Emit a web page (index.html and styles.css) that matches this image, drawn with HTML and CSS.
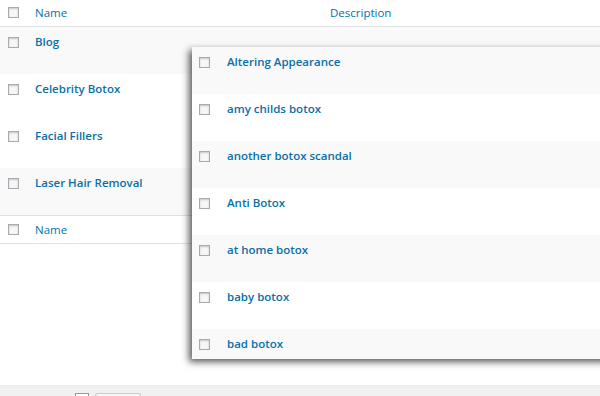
FILE: index.html
```html
<!DOCTYPE html>
<html lang="en">
<head>
  <meta charset="UTF-8">
  <meta name="viewport" content="width=device-width, initial-scale=1.0">
  <title>Tags</title>
  <link rel="stylesheet" href="styles.css">
</head>
<body>
  <div class="screen">
    <!-- tabel kategori di belakang -->
    <div class="list">
      <div class="row head">
        <span class="check"></span>
        <span class="col-name">Name</span>
        <span class="col-desc">Description</span>
      </div>
      <div class="row item alt"><span class="check"></span><a class="title">Blog</a></div>
      <div class="row item"><span class="check"></span><a class="title">Celebrity Botox</a></div>
      <div class="row item"><span class="check"></span><a class="title">Facial Fillers</a></div>
      <div class="row item alt"><span class="check"></span><a class="title">Laser Hair Removal</a></div>
      <div class="row head foot">
        <span class="check"></span>
        <span class="col-name">Name</span>
      </div>
    </div>

    <div class="spacer"></div>

    <div class="bottom-bar">
      <span class="mini-select"></span>
      <span class="mini-button"></span>
    </div>

    <!-- panel tag yang menimpa tabel -->
    <div class="popup">
      <div class="row item alt"><span class="check"></span><a class="title">Altering Appearance</a></div>
      <div class="row item"><span class="check"></span><a class="title">amy childs botox</a></div>
      <div class="row item alt"><span class="check"></span><a class="title">another botox scandal</a></div>
      <div class="row item"><span class="check"></span><a class="title">Anti Botox</a></div>
      <div class="row item alt"><span class="check"></span><a class="title">at home botox</a></div>
      <div class="row item"><span class="check"></span><a class="title">baby botox</a></div>
      <div class="row item alt"><span class="check"></span><a class="title">bad botox</a></div>
    </div>
  </div>
</body>
</html>
```

FILE: styles.css
```css
body { margin: 0; background: #fff; font-family: "Open Sans", Arial, sans-serif; font-size: 11.5px; color: #0073aa; }
.screen { position: relative; width: 600px; height: 396px; overflow: hidden; }

.row { display: flex; align-items: flex-start; box-sizing: border-box; }
.check {
  flex: none;
  width: 9px;
  height: 9px;
  margin: 0 16px 0 8px;
  border: 1px solid #a7abb0;
  background: #f7f7f7;
  box-shadow: inset 0 1px 2px rgba(0,0,0,.2);
}

.head { height: 27px; padding-top: 7px; border-bottom: 1px solid #e1e1e1; }
.head .col-name { line-height: 12px; width: 295px; }
.head .col-desc { line-height: 12px; }
.foot { border-top: 1px solid #e1e1e1; height: 29px; padding-top: 8px; }

.item { height: 47px; padding-top: 10px; }
.alt { background: #f9f9f9; }
.title { font-weight: 600; line-height: 12px; margin-top: -1px; color: #0a6fa6; }

.spacer { height: 141px; }

.bottom-bar {
  height: 11px;
  background: #f1f1f1;
  border-top: 1px solid #ececec;
  display: flex;
  align-items: flex-start;
  padding-top: 7px;
}
.mini-select {
  width: 12px;
  height: 10px;
  margin-left: 75px;
  border: 1px solid #999;
  border-bottom: none;
  background: #fff;
}
.mini-button {
  width: 44px;
  height: 10px;
  margin-left: 6px;
  border: 1px solid #ccc;
  border-bottom: none;
  border-radius: 3px 3px 0 0;
  background: #f7f7f7;
}

.popup {
  position: absolute;
  left: 192px;
  top: 47px;
  width: 440px;
  height: 312px;
  overflow: hidden;
  background: #fff;
  box-shadow: -3px 3px 7px rgba(0,0,0,.65);
}
.popup .check { margin-left: 7px; margin-right: 17px; }
```
